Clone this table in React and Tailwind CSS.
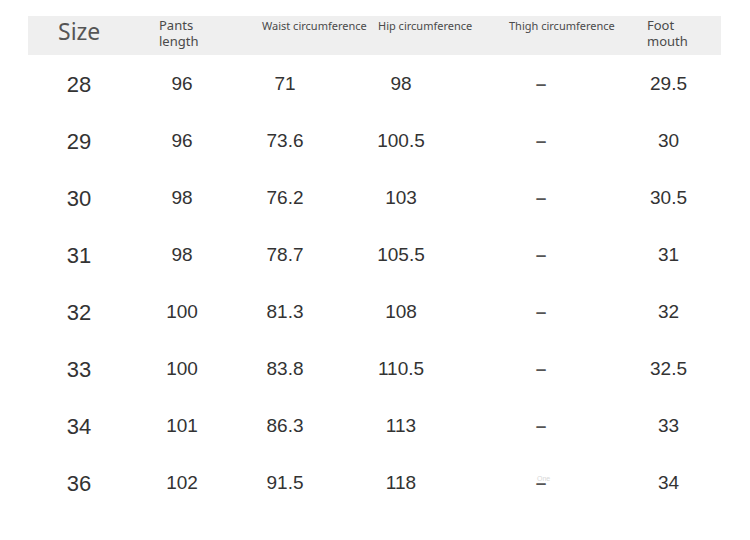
import React from 'react'

const rows = [
    ['28', '96', '71', '98', '–', '29.5'],
    ['29', '96', '73.6', '100.5', '–', '30'],
    ['30', '98', '76.2', '103', '–', '30.5'],
    ['31', '98', '78.7', '105.5', '–', '31'],
    ['32', '100', '81.3', '108', '–', '32'],
    ['33', '100', '83.8', '110.5', '–', '32.5'],
    ['34', '101', '86.3', '113', '–', '33'],
    ['36', '102', '91.5', '118', '–', '34'],
]

const cols = 'grid grid-cols-[102px_104px_102px_130px_150px_105px]'

const SizeChart = () => {
    return (
        <div className="w-[750px] h-[540px] bg-white pt-4 pl-[28px]" style={{ fontFamily: '"Liberation Sans", Arial, sans-serif' }}>
            {/* Header bar */}
            <div className="w-[693px] h-[39px] bg-[#efefef] flex text-[#4a4a4a]" style={{ fontFamily: '"Noto Sans", sans-serif' }}>
                <div className="w-[131px] pl-[30px] pt-[4px] text-[23px] leading-none text-[#555]">Size</div>
                <div className="w-[103px] pt-[1px] text-[13px] leading-[16px]">Pants<br />length</div>
                <div className="w-[116px] pt-[2px] text-[11px] leading-[16px] whitespace-nowrap">Waist circumference</div>
                <div className="w-[131px] pt-[2px] text-[11px] leading-[16px] whitespace-nowrap">Hip circumference</div>
                <div className="w-[138px] pt-[2px] text-[11px] leading-[16px] whitespace-nowrap">Thigh circumference</div>
                <div className="pt-[1px] text-[13px] leading-[16px]">Foot<br />mouth</div>
            </div>

            {/* Rows */}
            <div className="w-[693px] pt-[1px]">
                {rows.map((row, i) => (
                    <div key={row[0]} className={`${cols} h-[57px] items-center text-[#333]`}>
                        <div className="text-center text-[22px]">{row[0]}</div>
                        <div className="text-center text-[19px]">{row[1]}</div>
                        <div className="text-center text-[19px]">{row[2]}</div>
                        <div className="text-center text-[19px]">{row[3]}</div>
                        <div className="relative text-center text-[19px] font-bold text-[#555]">
                            {row[4]}
                            {i === rows.length - 1 && (
                                <span className="absolute left-[71px] top-[5px] text-[7px] font-normal text-[#d8d8d8]">One</span>
                            )}
                        </div>
                        <div className="text-center text-[19px]">{row[5]}</div>
                    </div>
                ))}
            </div>
        </div>
    )
}

export default function App() {
    return <SizeChart />
}
